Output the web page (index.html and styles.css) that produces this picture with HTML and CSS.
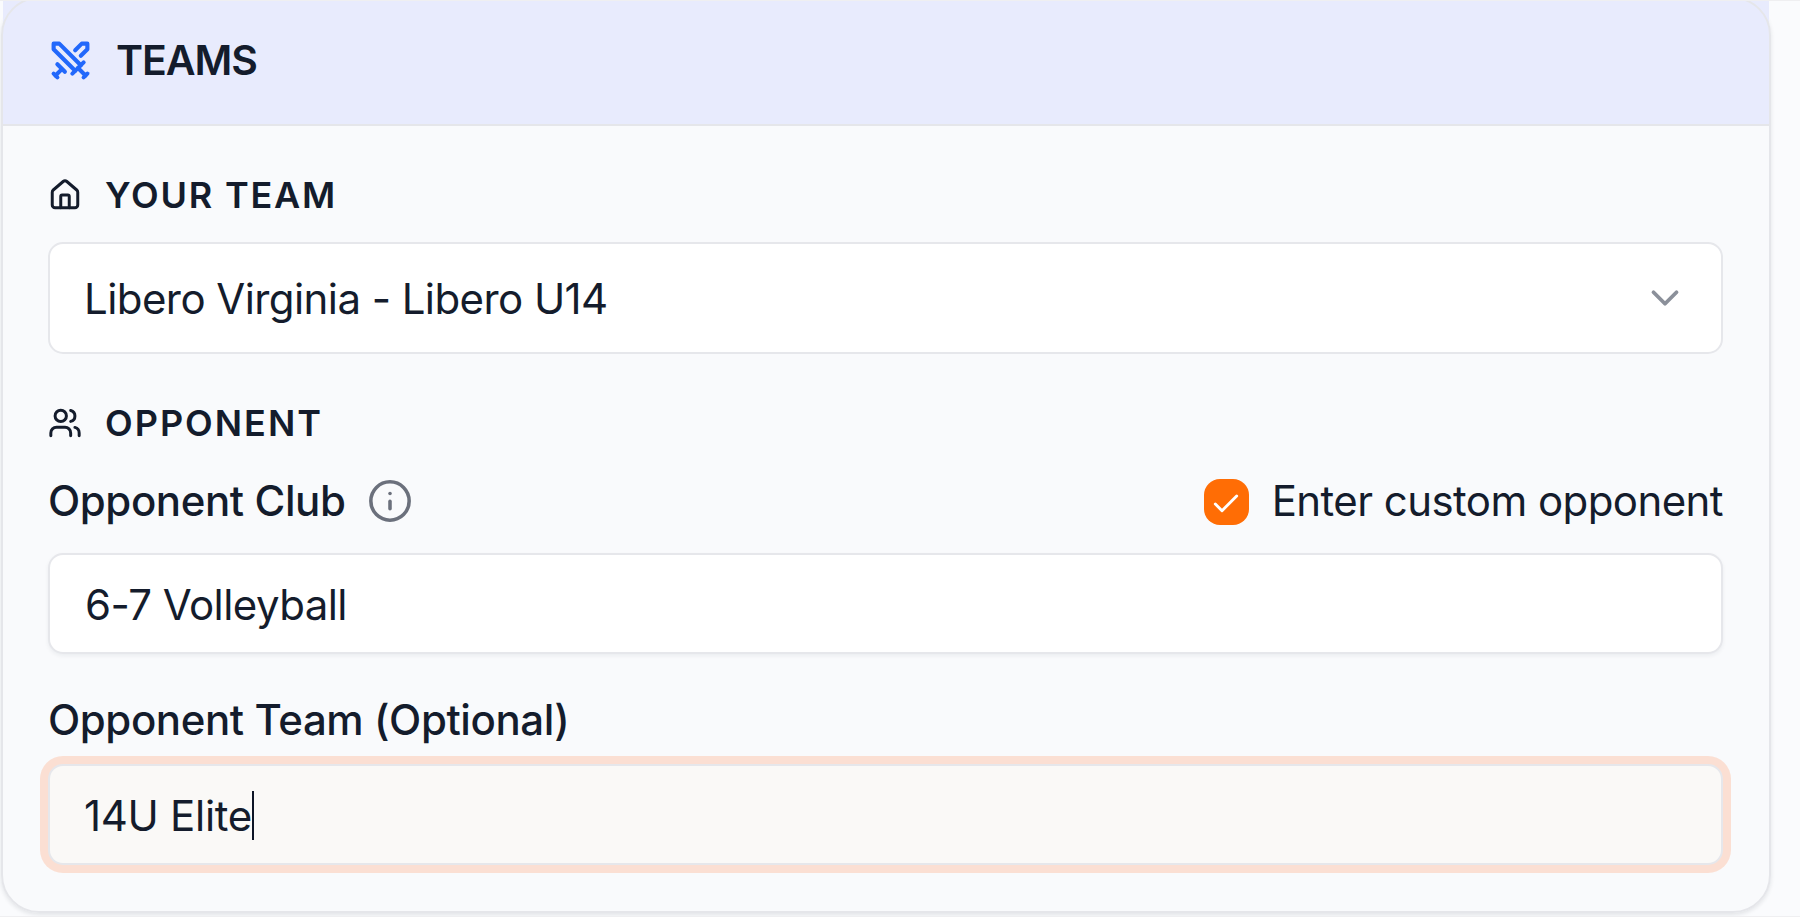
FILE: index.html
```html
<!DOCTYPE html>
<html lang="en">
<head>
<meta charset="utf-8">
<title>Teams</title>
<link rel="stylesheet" href="styles.css">
</head>
<body>
<main class="page">
  <section class="card">
    <header class="card-header">
      <svg class="icon icon-swords" viewBox="0 0 24 24"><path d="M14.5 17.5 3 6V3h3l11.5 11.5"/><path d="m13 19 6-6"/><path d="m16 16 4 4"/><path d="m19 21 2-2"/><path d="M14.5 6.5 18 3h3v3l-3.5 3.5"/><path d="m5 14 4 4"/><path d="m7 17-3 3"/><path d="m3 19 2 2"/></svg>
      <h2 class="title">TEAMS</h2>
    </header>
    <div class="card-body">
      <div class="section-label">
        <svg class="icon icon-section" viewBox="0 0 24 24"><path d="M15 21v-8a1 1 0 0 0-1-1h-4a1 1 0 0 0-1 1v8"/><path d="M3 10a2 2 0 0 1 .709-1.528l7-5.999a2 2 0 0 1 2.582 0l7 5.999A2 2 0 0 1 21 10v9a2 2 0 0 1-2 2H5a2 2 0 0 1-2-2z"/></svg>
        <span class="section-text your-team">YOUR TEAM</span>
      </div>
      <div class="field select">
        <span class="value team-value">Libero Virginia - Libero U14</span>
        <svg class="icon icon-chevron" viewBox="0 0 24 24"><path d="m6 9 6 6 6-6"/></svg>
      </div>
      <div class="section-label opponent-label">
        <svg class="icon icon-section" viewBox="0 0 24 24"><path d="M16 21v-2a4 4 0 0 0-4-4H6a4 4 0 0 0-4 4v2"/><circle cx="9" cy="7" r="4"/><path d="M22 21v-2a4 4 0 0 0-3-3.87"/><path d="M16 3.13a4 4 0 0 1 0 7.75"/></svg>
        <span class="section-text opponent">OPPONENT</span>
      </div>
      <div class="club-row">
        <span class="label club-label">Opponent Club</span>
        <svg class="icon icon-info" viewBox="0 0 24 24"><circle cx="12" cy="12" r="10"/><path d="M12 16v-3.8"/><path d="M12 8.1h.01"/></svg>
        <span class="checkbox"><svg class="icon icon-check" viewBox="0 0 24 24"><path d="M20 6 9 17l-5-5"/></svg></span>
        <span class="value custom-label">Enter custom opponent</span>
      </div>
      <div class="field input"><span class="value club-value">6-7 Volleyball</span></div>
      <div class="label team-label"><span class="team-label-text">Opponent Team (Optional)</span></div>
      <div class="field input focused"><span class="value name-value">14U Elite</span><i class="caret"></i></div>
    </div>
  </section>
</main>
</body>
</html>
```

FILE: styles.css
```css
* { box-sizing: border-box; }
body { margin: 0; font-family: Inter, "Liberation Sans", sans-serif; color: #141c2c; }
.page {
  height: 917px;
  overflow: hidden;
  background: #fafbfd;
  border-top: 1px solid #efeff1;
  border-bottom: 1px solid #efeff1;
}
.card {
  position: relative;
  width: 1770px;
  height: 916px;
  margin: -4px 0 0 1px;
  padding: 2px;
  border-radius: 38px;
  background: #f9fafc;
  box-shadow: 0 2px 4px rgba(20, 28, 44, 0.1);
}
.card::after {
  content: "";
  position: absolute;
  inset: 0;
  border: 2px solid #e5e6ea;
  border-radius: 38px;
}
.card-header {
  display: flex;
  align-items: center;
  gap: 23px;
  height: 127px;
  padding: 0 0 3px 45px;
  background: #e8ebfd;
  border-bottom: 2px solid #e5e6ea;
}
.icon {
  flex: none;
  fill: none;
  stroke: currentColor;
  stroke-width: 2;
  stroke-linecap: round;
  stroke-linejoin: round;
}
.icon-swords { width: 45px; height: 45px; color: #2268fb; stroke-width: 2.2; }
.icon-section { width: 34px; height: 34px; stroke-width: 2.1; }
.icon-chevron { width: 46px; height: 46px; color: #8b909a; }
.icon-info { width: 46px; height: 46px; color: #6b707c; stroke-width: 1.85; margin-left: 22px; }
.icon-check { width: 32px; height: 32px; color: #fff; stroke-width: 2.2; }
.title { margin: 0; font-size: 41px; font-weight: 600; letter-spacing: -1.1px; line-height: 50px; }
.card-body { padding: 44px 46px 0 45px; }
.section-label { display: flex; align-items: center; gap: 23px; height: 50px; }
.section-text { font-size: 36px; font-weight: 600; letter-spacing: 2px; line-height: 50px; }
.your-team { letter-spacing: 1.8px; }
.field {
  display: flex;
  align-items: center;
  border: 2px solid #e6e7eb;
  border-radius: 15px;
  background: #fff;
  padding: 1px 0 0 34px;
}
.select { justify-content: space-between; height: 112px; margin-top: 22px; padding: 0 33px 0 34px; }
.opponent-label { margin-top: 44px; }
.value { font-size: 42px; letter-spacing: -0.57px; line-height: 50px; white-space: nowrap; }
.team-value { padding-top: 2px; font-feature-settings: "calt" 0; }
.club-value { padding: 1px 0 0 1px; }
.name-value { padding-top: 1px; letter-spacing: -0.3px; }
.label { font-size: 42px; font-weight: 500; letter-spacing: -0.41px; line-height: 50px; white-space: nowrap; }
.club-row { display: flex; align-items: center; height: 50px; margin-top: 28px; }
.checkbox {
  display: flex;
  align-items: center;
  justify-content: center;
  width: 45px;
  height: 46px;
  margin: 1px 23px 0 auto;
  padding-top: 4px;
  border-radius: 16px;
  background: #ff6d05;
}
.input { height: 101px; margin-top: 27px; box-shadow: 0 2px 4px rgba(20, 28, 44, 0.06); }
.team-label { height: 50px; margin-top: 41px; }
.focused { margin-top: 19px; background: #faf9f7; box-shadow: 0 0 0 8px #fbdfd3; }
.caret { width: 2px; height: 49px; background: #0d1526; }
```
